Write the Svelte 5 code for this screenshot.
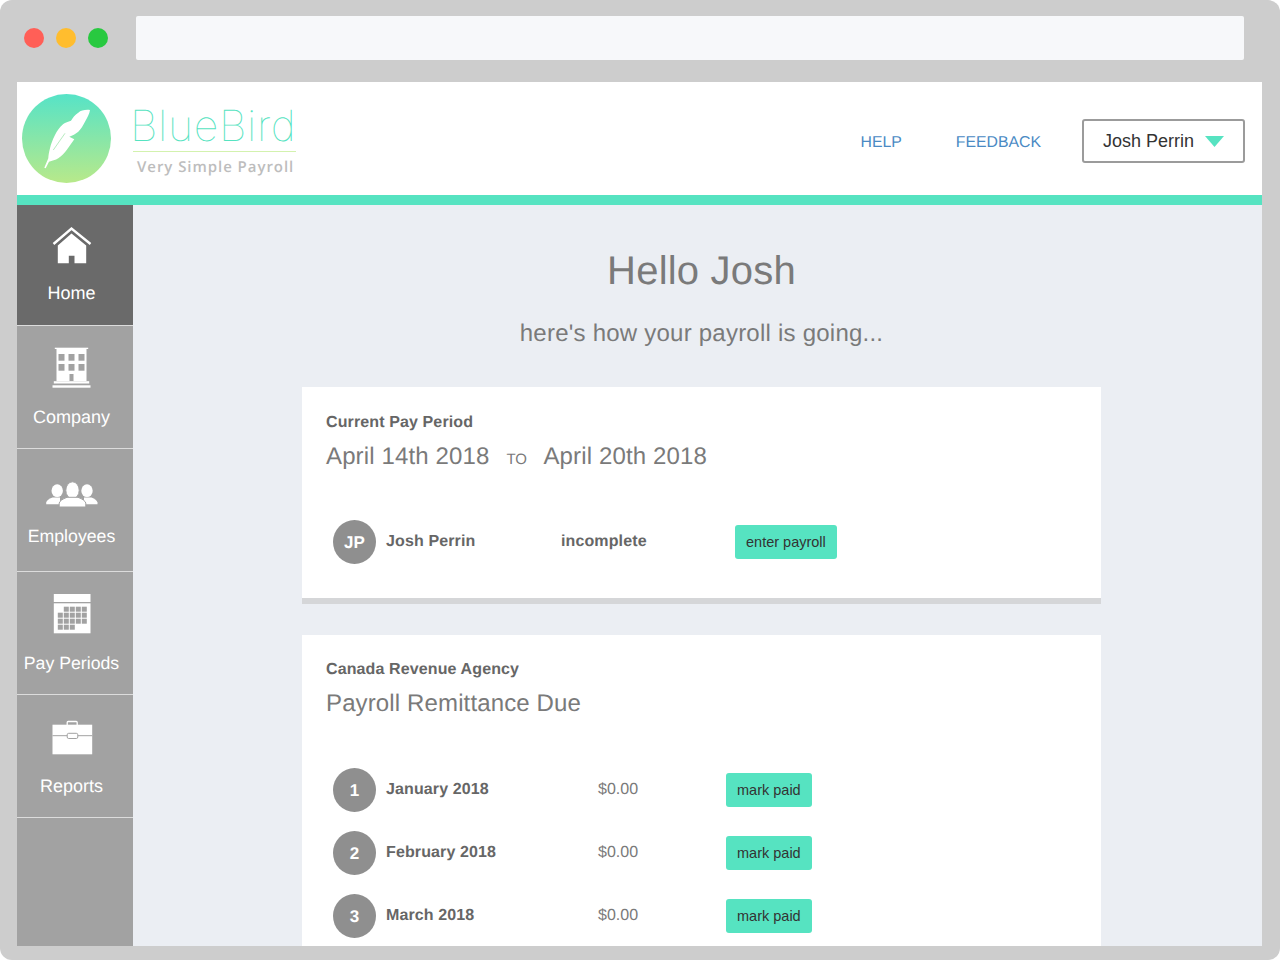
<script>
  const remittances = [
    { num: 1, month: "January 2018", amount: "$0.00" },
    { num: 2, month: "February 2018", amount: "$0.00" },
    { num: 3, month: "March 2018", amount: "$0.00" }
  ];

  const windows = [16.5, 26.5, 36.5];
  // the month grid on the pay periods icon: [first column, number of cells]
  const calendarRows = [[1, 4], [0, 5], [0, 5], [0, 3]];
</script>

<div class="frame">
  <div class="chrome">
    <span class="dot red"></span>
    <span class="dot yellow"></span>
    <span class="dot green"></span>
    <div class="urlbar"></div>
  </div>

  <div class="window">
    <header class="header">
      <div class="logo">
        <svg viewBox="0 0 89 89" width="89" height="89">
          <defs>
            <linearGradient id="logo-fill" x1="0" y1="0" x2="0" y2="1">
              <stop offset="0" stop-color="#56e3c7" />
              <stop offset="1" stop-color="#b8e98a" />
            </linearGradient>
          </defs>
          <circle cx="44.5" cy="44.5" r="44.5" fill="url(#logo-fill)" />
          <path
            d="M68 16C63 15.5 59 16.5 56.3 18.7C53 21 50.5 24 49 26.7C46 27.5 43.5 28.5 41.3 30C37.5 33 35 37 33 41C30.5 46 29 50 28 54.3C27 58 26.5 61 26.3 64.3L22.3 73.7L23.7 74.3L27 67.7C30 67 33.5 66 36.3 64.3C39.5 62 42.5 59 44.7 56L52.3 45.3L47.3 42.7C50.5 41.5 53.5 40 56.3 37.7C59 35 61 31.5 63 27.7C65.5 23.5 67.5 19.5 68 16Z"
            fill="#fff"
          />
          <path d="M31.3 56L43 39.3" fill="none" stroke="#a5e6b0" stroke-width="0.8" />
        </svg>
      </div>
      <div class="brand">
        <div class="brand-name">BlueBird</div>
        <div class="brand-tag">Very Simple Payroll</div>
      </div>
      <nav class="nav">
        <a href="#help" class="help">HELP</a>
        <a href="#feedback" class="feedback">FEEDBACK</a>
        <button class="user">
          <span>Josh Perrin</span>
          <svg viewBox="0 0 19 11" width="19" height="11"><path d="M0 0H19L9.5 11Z" fill="#56e3c1" /></svg>
        </button>
      </nav>
    </header>

    <div class="body">
      <aside class="sidebar">
        <a href="#home" class="item active">
          <svg viewBox="0 0 60 60" width="60" height="60">
            <path d="M11.5 29L29.5 13.5L48.5 29" fill="none" stroke="#fff" stroke-width="2.4" />
            <path d="M15.8 30.5L29.5 18.5L44.2 30.5V48.3H32.5V40.7H26.8V48.3H15.8Z" fill="#fff" />
          </svg>
          <span>Home</span>
        </a>
        <a href="#company" class="item">
          <svg viewBox="0 0 60 60" width="60" height="60">
            <rect x="12.8" y="9.7" width="33.4" height="1.3" fill="#fff" />
            <rect x="14.5" y="10" width="30" height="33" fill="#fff" />
            {#each windows as x}
              <rect {x} y="16" width="6" height="6.7" fill="#a2a2a2" />
              <rect {x} y="26" width="6" height="6.7" fill="#a2a2a2" />
            {/each}
            <rect x="27.5" y="36" width="4" height="7" fill="#a2a2a2" />
            <rect x="11.8" y="43.2" width="35.4" height="2.3" fill="#fff" />
            <rect x="10.5" y="47.3" width="38" height="2.4" fill="#fff" />
          </svg>
          <span>Company</span>
        </a>
        <a href="#employees" class="item employees">
          <svg viewBox="0 0 60 60" width="60" height="60">
            <ellipse cx="15.2" cy="29.7" rx="5.7" ry="6.4" fill="#fff" />
            <ellipse cx="45" cy="29.7" rx="5.7" ry="6.4" fill="#fff" />
            <path d="M4.2 43.3V41.5Q5 38.5 10.5 36.5H18V43.3Z" fill="#fff" />
            <path d="M55.5 43.3V41.5Q54.5 38.5 49.5 36.5H42V43.3Z" fill="#fff" />
            <ellipse cx="30.5" cy="29.3" rx="6.7" ry="8.5" fill="#fff" stroke="#a2a2a2" stroke-width="1" />
            <path d="M17.2 46V42Q18 39 25 36.3H36Q43 39 43.8 42V46Z" fill="#fff" stroke="#a2a2a2" stroke-width="1" />
          </svg>
          <span>Employees</span>
        </a>
        <a href="#pay-periods" class="item periods">
          <svg viewBox="0 0 60 60" width="60" height="60">
            <rect x="11.8" y="10" width="36.7" height="8" fill="#fff" />
            <rect x="11.8" y="19.3" width="36.7" height="30" fill="#fff" />
            {#each calendarRows as [start, count], row}
              {#each Array(count) as _, i}
                <rect x={15.8 + (start + i) * 6} y={22.7 + row * 6} width="5" height="5" fill="#a2a2a2" />
              {/each}
            {/each}
          </svg>
          <span>Pay Periods</span>
        </a>
        <a href="#reports" class="item">
          <svg viewBox="0 0 60 60" width="60" height="60">
            <rect x="25.2" y="14.5" width="10" height="5" rx="1" fill="none" stroke="#fff" stroke-width="1.3" />
            <rect x="10.5" y="17.7" width="39.7" height="29.6" fill="#fff" />
            <line x1="10.5" y1="28.7" x2="50.2" y2="28.7" stroke="#a2a2a2" stroke-width="1" />
            <rect x="25.2" y="26.3" width="10.6" height="5.2" rx="1.5" fill="#fff" stroke="#a2a2a2" stroke-width="1" />
          </svg>
          <span>Reports</span>
        </a>
      </aside>

      <main class="main">
        <h1>Hello Josh</h1>
        <p class="sub">here's how your payroll is going...</p>

        <section class="card">
          <div class="card-label">Current Pay Period</div>
          <div class="card-title">
            <span>April 14th 2018</span>
            <span class="to">to</span>
            <span>April 20th 2018</span>
          </div>
          <div class="row row-period">
            <span class="avatar">JP</span>
            <span class="name">Josh Perrin</span>
            <span class="status">incomplete</span>
            <button class="action">enter payroll</button>
          </div>
        </section>

        <section class="card">
          <div class="card-label">Canada Revenue Agency</div>
          <div class="card-title">Payroll Remittance Due</div>
          <div class="rows">
            {#each remittances as r}
              <div class="row row-remit">
                <span class="avatar">{r.num}</span>
                <span class="name">{r.month}</span>
                <span class="amount">{r.amount}</span>
                <button class="action">mark paid</button>
              </div>
            {/each}
          </div>
        </section>
      </main>
    </div>
  </div>
</div>

<style>
  :global(body) {
    background: #fff;
    font-family: "Liberation Sans", Arial, sans-serif;
    text-rendering: geometricPrecision;
  }

  .frame {
    width: 1280px;
    height: 960px;
    box-sizing: border-box;
    background: #cdcdcd;
    border-radius: 12px;
    padding: 0 18px 14px 17px;
    display: flex;
    flex-direction: column;
    overflow: hidden;
  }

  .chrome {
    height: 82px;
    flex: none;
    box-sizing: border-box;
    padding: 16px 18px 22px 7px;
    display: flex;
    align-items: center;
    gap: 12px;
  }

  .dot {
    width: 20px;
    height: 20px;
    border-radius: 50%;
    flex: none;
    margin-top: -1px;
  }

  .red { background: #ff5f57; }
  .yellow { background: #ffbd2e; }
  .green { background: #28c940; }

  .urlbar {
    flex: 1;
    height: 44px;
    margin-left: 16px;
    background: #f7f8fa;
    border-radius: 2px;
  }

  .window {
    flex: 1;
    min-height: 0;
    display: flex;
    flex-direction: column;
    background: #ebeef3;
  }

  .header {
    height: 123px;
    flex: none;
    box-sizing: border-box;
    background: #fff;
    border-bottom: 10px solid #56e3c1;
    display: flex;
    padding: 0 17px 0 5px;
  }

  .logo {
    margin-top: 12px;
    height: 89px;
  }

  .brand {
    margin-left: 22px;
    width: 163px;
  }

  .brand-name {
    margin-top: 20px;
    height: 50px;
    box-sizing: border-box;
    font-family: Inter, "Liberation Sans", sans-serif;
    font-weight: 100;
    font-size: 43px;
    line-height: 48px;
    letter-spacing: 0.6px;
    text-indent: -3px;
    color: #56e3c1;
    border-bottom: 1px solid #d3f2ae;
    white-space: nowrap;
  }

  .brand-tag {
    margin: 5px 0 0 4px;
    font-family: "Open Sans", sans-serif;
    font-weight: 600;
    font-size: 15px;
    line-height: 20px;
    letter-spacing: 0.95px;
    color: #bdbdbd;
    white-space: nowrap;
  }

  .nav {
    margin-left: auto;
    padding-top: 5px;
    display: flex;
    align-items: center;
  }

  .nav a {
    margin-top: 3px;
    font-size: 15.8px;
    color: #4a8ac4;
    text-decoration: none;
  }

  .feedback {
    margin-left: 54px;
  }

  .user {
    margin-left: 41px;
    width: 163px;
    height: 44px;
    box-sizing: border-box;
    padding: 0 19px 0 19px;
    background: #fff;
    border: 2px solid #9b9b9b;
    border-radius: 3px;
    font: 18px "Liberation Sans", Arial, sans-serif;
    color: #333;
    display: flex;
    align-items: center;
    justify-content: space-between;
  }

  .body {
    flex: 1;
    min-height: 0;
    display: flex;
  }

  .sidebar {
    width: 116px;
    flex: none;
    background: #a2a2a2;
  }

  .item {
    height: 123px;
    box-sizing: border-box;
    padding: 12px 7px 0 0;
    border-bottom: 1px solid #dcdcdc;
    display: flex;
    flex-direction: column;
    align-items: center;
    color: #fff;
    text-decoration: none;
    font-size: 18px;
    line-height: 36px;
  }

  .item svg {
    flex: none;
    margin-bottom: 1px;
  }

  .item.employees {
    font-size: 17.7px;
  }

  .item.employees svg {
    margin-bottom: -3px;
  }

  .item.periods {
    font-size: 17.7px;
  }

  .item.active {
    height: 121px;
    padding-top: 10px;
    background: #6a6a6a;
  }

  .item.active svg {
    margin-bottom: 0;
  }

  .main {
    flex: 1;
    min-width: 0;
    overflow: hidden;
    padding: 43px 161px 0 169px;
    color: #7a7a7a;
  }

  h1 {
    margin: 0;
    font-size: 40px;
    font-weight: 400;
    line-height: 46px;
    letter-spacing: 0.2px;
    text-align: center;
  }

  .sub {
    margin: 25px 0 0;
    font-size: 24px;
    line-height: 30px;
    letter-spacing: 0.23px;
    text-align: center;
  }

  .card {
    margin-top: 38px;
    padding: 26px 24px 34px;
    background: #fff;
    border-bottom: 6px solid #d5d6d8;
  }

  .card + .card {
    margin-top: 31px;
    padding-top: 25px;
  }

  .card-label {
    font-size: 16px;
    font-weight: 700;
    line-height: 20px;
    letter-spacing: 0.12px;
    color: #666;
  }

  .card-title {
    margin-top: 9px;
    display: flex;
    align-items: baseline;
    font-size: 24px;
    line-height: 30px;
    letter-spacing: 0.13px;
  }

  .to {
    margin: 0 16.5px 0 17px;
    font-size: 15px;
    line-height: 1;
    letter-spacing: 0;
    text-transform: uppercase;
  }

  .row {
    margin-left: 7px;
    display: grid;
    align-items: center;
  }

  .row-period {
    margin-top: 48px;
    grid-template-columns: 43px 185px 174px auto;
  }

  .row-remit {
    grid-template-columns: 43px 222px 128px auto;
  }

  .rows {
    margin-top: 49px;
    display: flex;
    flex-direction: column;
    gap: 19px;
  }

  .avatar {
    width: 43px;
    height: 44px;
    box-sizing: border-box;
    padding-top: 1px;
    border-radius: 50%;
    background: #8f8f8f;
    color: #fff;
    font-size: 17px;
    font-weight: 700;
    display: flex;
    align-items: center;
    justify-content: center;
  }

  .name {
    margin-left: 10px;
    padding-bottom: 1px;
    font-size: 16px;
    font-weight: 700;
    letter-spacing: 0.12px;
    color: #666;
  }

  .status {
    font-size: 16px;
    font-weight: 700;
    letter-spacing: 0.12px;
    color: #666;
  }

  .amount {
    font-size: 16px;
    color: #7a7a7a;
  }

  .action {
    justify-self: start;
    height: 34px;
    padding: 0 11px;
    border: none;
    border-radius: 3px;
    background: #56e3c1;
    color: #333;
    font: 14.5px "Liberation Sans", Arial, sans-serif;
  }
</style>
